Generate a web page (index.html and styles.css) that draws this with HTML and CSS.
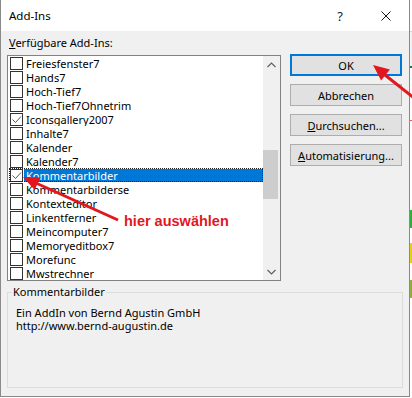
FILE: index.html
```html
<!DOCTYPE html>
<html lang="de">
  <head>
    <meta charset="UTF-8" />
    <meta name="viewport" content="width=device-width, initial-scale=1.0" />
    <title>Add-Ins</title>
    <link rel="stylesheet" href="styles.css">
  </head>
  <body>
    <div class="screen">
      <div class="dialog">
        <div class="titlebar">
          <span class="title">Add-Ins</span>
          <span class="caption-btn">?</span>
          <span class="caption-btn">
            <svg width="10" height="10" viewBox="0 0 10 10"><path d="M0.5 0.5 L9.5 9.5 M9.5 0.5 L0.5 9.5" stroke="#1a1a1a" stroke-width="1" fill="none"/></svg>
          </span>
        </div>
        <div class="client">
          <div class="main">
            <div class="list-col">
              <div class="list-label"><u>V</u>erfügbare Add-Ins:</div>
              <div class="listbox">
                <ul class="items">
                  <li class="row"><span class="box"></span><span class="name">Freiesfenster7</span></li>
                  <li class="row"><span class="box"></span><span class="name">Hands7</span></li>
                  <li class="row"><span class="box"></span><span class="name">Hoch-Tief7</span></li>
                  <li class="row"><span class="box"></span><span class="name">Hoch-Tief7Ohnetrim</span></li>
                  <li class="row"><span class="box checked"><svg width="11" height="11" viewBox="0 0 11 11"><path d="M1.5 5.5 L4.5 8.5 L10 2.5" stroke="#555" stroke-width="1" fill="none"/></svg></span><span class="name">Iconsgallery2007</span></li>
                  <li class="row"><span class="box"></span><span class="name">Inhalte7</span></li>
                  <li class="row"><span class="box"></span><span class="name">Kalender</span></li>
                  <li class="row"><span class="box"></span><span class="name">Kalender7</span></li>
                  <li class="row selected"><span class="box checked"><svg width="11" height="11" viewBox="0 0 11 11"><path d="M1.5 5.5 L4.5 8.5 L10 2.5" stroke="#555" stroke-width="1" fill="none"/></svg></span><span class="name">Kommentarbilder</span></li>
                  <li class="row"><span class="box"></span><span class="name">Kommentarbilderse</span></li>
                  <li class="row"><span class="box"></span><span class="name">Kontexteditor</span></li>
                  <li class="row"><span class="box"></span><span class="name">Linkentferner</span></li>
                  <li class="row"><span class="box"></span><span class="name">Meincomputer7</span></li>
                  <li class="row"><span class="box"></span><span class="name">Memoryeditbox7</span></li>
                  <li class="row"><span class="box"></span><span class="name">Morefunc</span></li>
                  <li class="row"><span class="box"></span><span class="name">Mwstrechner</span></li>
                </ul>
                <div class="scrollbar">
                  <span class="arrow">
                    <svg width="9" height="6" viewBox="0 0 9 6"><path d="M0.5 5 L4.5 1 L8.5 5" stroke="#606060" stroke-width="1.2" fill="none"/></svg>
                  </span>
                  <div class="track"><div class="thumb"></div></div>
                  <span class="arrow">
                    <svg width="9" height="6" viewBox="0 0 9 6"><path d="M0.5 1 L4.5 5 L8.5 1" stroke="#606060" stroke-width="1.2" fill="none"/></svg>
                  </span>
                </div>
              </div>
            </div>
            <div class="buttons">
              <button class="btn default">OK</button>
              <button class="btn">Abbrechen</button>
              <button class="btn"><u>D</u>urchsuchen...</button>
              <button class="btn"><u>A</u>utomatisierung...</button>
            </div>
          </div>
          <fieldset class="info">
            <legend>Kommentarbilder</legend>
            <div class="info-text">
              <div>Ein AddIn von Bernd Agustin GmbH</div>
              <div>http://www.bernd-augustin.de</div>
            </div>
          </fieldset>
        </div>
      </div>
      <div class="sheet"></div>

      <svg class="marks" width="412" height="398" viewBox="0 0 412 398">
        <line x1="118" y1="220" x2="37" y2="183.5" stroke="#e2161e" stroke-width="3"/>
        <polygon points="23,177 40.5,177.2 34.7,190" fill="#e2161e"/>
        <line x1="414" y1="98" x2="385" y2="75" stroke="#e2161e" stroke-width="3"/>
        <polygon points="373,65 389.9,69.5 381.1,80.5" fill="#e2161e"/>
      </svg>
      <div class="note">hier auswählen</div>
    </div>
  </body>
</html>
```

FILE: styles.css
```css
body {
  margin: 0;
  padding: 0;
  background: #fff;
  font-family: "Noto Sans", sans-serif;
  font-size: 11px;
  color: #000;
}
.screen {
  position: relative;
  width: 412px;
  height: 398px;
  display: flex;
  overflow: hidden;
}
.dialog {
  width: 410px;
  height: 397px;
  box-sizing: border-box;
  border: 1px solid #8a8a8a;
  border-top: none;
  display: flex;
  flex-direction: column;
  background: #f0f0f0;
}
.titlebar {
  height: 31px;
  background: #fff;
  display: flex;
  align-items: center;
}
.title {
  flex: 1;
  padding-left: 8px;
  font-size: 11.5px;
}
.caption-btn {
  width: 46px;
  height: 31px;
  display: flex;
  align-items: center;
  justify-content: center;
  font-size: 13px;
  color: #1a1a1a;
}
.client {
  flex: 1;
  padding: 4px 6px 0 6px;
}
.main {
  display: flex;
}
.list-label {
  height: 16px;
  line-height: 16px;
  padding-left: 2px;
  margin-bottom: 4px;
}
.listbox {
  width: 274px;
  height: 226px;
  box-sizing: border-box;
  border: 1px solid #828282;
  background: #fff;
  display: flex;
}
.items {
  flex: 1;
  list-style: none;
  margin: 0;
  padding: 0 0 0 1px;
  overflow: hidden;
}
.row {
  height: 14px;
  display: flex;
  align-items: center;
  padding-left: 1px;
}
.box {
  width: 13px;
  height: 13px;
  box-sizing: border-box;
  border: 1px solid #333;
  background: #fff;
  display: flex;
  align-items: center;
  justify-content: center;
  margin-right: 1px;
}
.name {
  flex: 1;
  height: 13px;
  line-height: 13px;
  padding-left: 2px;
  white-space: nowrap;
  overflow: hidden;
}
.row.selected {
  outline: 1px dotted #222;
  outline-offset: -1px;
}
.row.selected .name {
  background: #0078d7;
  color: #fff;
}
.scrollbar {
  width: 17px;
  background: #f0f0f0;
  display: flex;
  flex-direction: column;
}
.arrow {
  height: 17px;
  display: flex;
  align-items: center;
  justify-content: center;
}
.track {
  flex: 1;
}
.thumb {
  margin-top: 77px;
  height: 49px;
  width: 15px;
  background: #cdcdcd;
}
.buttons {
  margin-left: 9px;
  margin-top: 19px;
  display: flex;
  flex-direction: column;
  gap: 8px;
}
.btn {
  width: 112px;
  height: 22px;
  box-sizing: border-box;
  border: 1px solid #adadad;
  background: #e1e1e1;
  font-family: "Noto Sans", sans-serif;
  font-size: 11px;
  color: #000;
  padding: 0;
}
.btn.default {
  border: 2px solid #0078d7;
}
.info {
  margin: 4px 0 0 0;
  padding: 7px 4px 55px 4px;
  border: 1px solid #dcdcdc;
}
.info legend {
  padding: 0 1px;
  line-height: 14px;
}
.info-text {
  padding-left: 4px;
  line-height: 13px;
}
.sheet {
  width: 2px;
  height: 398px;
  background: linear-gradient(to bottom, #fff 0 31px, #d4d4d4 31px 32px, #f3f3f3 32px 66px, #217346 66px 68px, #fff 68px 120px, #e06060 120px 121px, #fff 121px 210px, #2bb03b 210px 228px, #fff 228px 243px, #e3cf1e 243px 263px, #fff 263px 280px, #93ad3d 280px 298px, #fff 298px);
}
.marks {
  position: absolute;
  left: 0;
  top: 0;
}
.note {
  position: absolute;
  left: 124px;
  top: 214px;
  font-family: "Liberation Sans", Arial, sans-serif;
  font-weight: bold;
  font-size: 14.5px;
  line-height: 14.5px;
  color: #e2161e;
  white-space: nowrap;
}
```
